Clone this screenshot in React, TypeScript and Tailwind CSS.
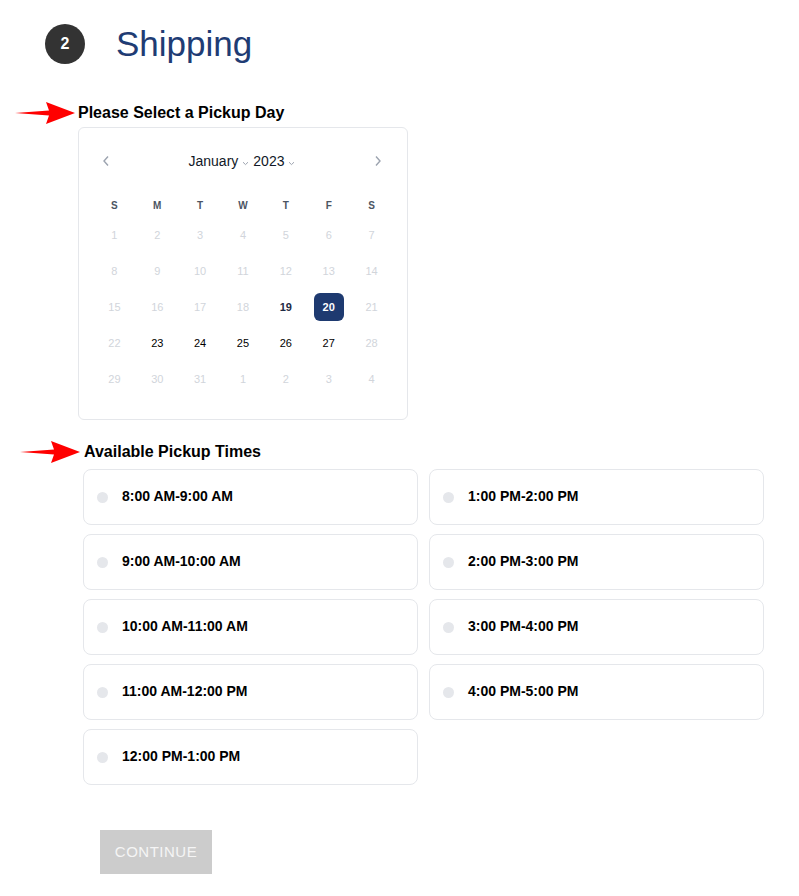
import React, { useState } from 'react';

const FONT = { fontFamily: '"Liberation Sans", Arial, sans-serif' };

const WEEKDAYS = ['S', 'M', 'T', 'W', 'T', 'F', 'S'];

// Jan 2023 grid; enabled days are the pickup window
const ROWS: number[][] = [
  [1, 2, 3, 4, 5, 6, 7],
  [8, 9, 10, 11, 12, 13, 14],
  [15, 16, 17, 18, 19, 20, 21],
  [22, 23, 24, 25, 26, 27, 28],
  [29, 30, 31, 1, 2, 3, 4],
];
const ENABLED = [19, 20, 23, 24, 25, 26, 27];

const SLOTS = [
  ['8:00 AM-9:00 AM', '1:00 PM-2:00 PM'],
  ['9:00 AM-10:00 AM', '2:00 PM-3:00 PM'],
  ['10:00 AM-11:00 AM', '3:00 PM-4:00 PM'],
  ['11:00 AM-12:00 PM', '4:00 PM-5:00 PM'],
  ['12:00 PM-1:00 PM', null],
];

function Arrow() {
  return (
    <svg width="60" height="22" viewBox="0 0 60 22" className="shrink-0">
      <polygon points="0,11 34,8.5 31,0 60,11 31,22 34,13.5" fill="#f00" />
    </svg>
  );
}

function Caret() {
  return (
    <svg width="7" height="5" viewBox="0 0 7 5" className="mt-[4px]">
      <path d="M1 1.2 L3.5 3.6 L6 1.2" stroke="#9ca3af" strokeWidth="1" fill="none" />
    </svg>
  );
}

function Chevron({ dir }: { dir: 'left' | 'right' }) {
  return (
    <svg width="8" height="12" viewBox="0 0 8 12">
      <path
        d={dir === 'left' ? 'M6 1.5 L2 6 L6 10.5' : 'M2 1.5 L6 6 L2 10.5'}
        stroke="#9ca3af"
        strokeWidth="1.4"
        fill="none"
      />
    </svg>
  );
}

export default function App() {
  const [day, setDay] = useState(20);
  const [slot, setSlot] = useState<string | null>(null);

  return (
    <div className="min-h-screen bg-white pb-[23px]" style={FONT}>
      {/* Step header */}
      <div className="flex items-center pt-[24px] pl-[45px]">
        <div className="flex h-[40px] w-[40px] items-center justify-center rounded-full bg-[#333333] text-base font-semibold text-white">
          2
        </div>
        <h2 className="ml-[31px] text-[35px] leading-[40px] text-[#1f3c74]">Shipping</h2>
      </div>

      {/* Pickup day */}
      <div className="mt-[38px] flex items-center pl-[15px]">
        <Arrow />
        <p className="ml-[3px] text-base font-bold leading-[22px] text-black">Please Select a Pickup Day</p>
      </div>

      <div className="ml-[78px] mt-[3px] w-[330px] rounded-md border border-[#e5e7eb] px-[14px] pt-[17px] pb-[22px]">
        <div className="flex h-[32px] items-center justify-between pl-[3px] pr-[5px]">
          <button className="flex h-[20px] w-[20px] items-center justify-center">
            <Chevron dir="left" />
          </button>
          <div className="flex items-center gap-[4px] text-[14px] text-[#111827]">
            <span>January</span>
            <Caret />
            <span>2023</span>
            <Caret />
          </div>
          <button className="flex h-[20px] w-[20px] items-center justify-center">
            <Chevron dir="right" />
          </button>
        </div>

        <div className="mt-[16px] grid h-[24px] grid-cols-7 items-center text-center text-[10px] font-bold text-[#4b5563]">
          {WEEKDAYS.map((d, i) => (
            <span key={i}>{d}</span>
          ))}
        </div>

        {ROWS.map((row, r) => (
          <div key={r} className="grid h-[36px] grid-cols-7 items-center text-center text-[11px]">
            {row.map((d, c) => {
              const inMonth = !(r === 4 && c > 2);
              const enabled = inMonth && ENABLED.includes(d);
              const selected = enabled && d === day;
              return (
                <div key={c} className="flex justify-center">
                  <button
                    disabled={!enabled}
                    onClick={() => setDay(d)}
                    className={
                      selected
                        ? 'flex h-[28px] w-[30px] items-center justify-center rounded-md bg-[#1e3a70] font-bold text-white'
                        : enabled
                          ? d === 19
                            ? 'flex h-[28px] w-[30px] items-center justify-center font-semibold text-[#1f2a44]'
                            : 'flex h-[28px] w-[30px] items-center justify-center text-black'
                          : 'flex h-[28px] w-[30px] items-center justify-center text-[#d1d5db]'
                    }
                  >
                    {d}
                  </button>
                </div>
              );
            })}
          </div>
        ))}
      </div>

      {/* Pickup times */}
      <div className="mt-[21px] flex items-center pl-[20px]">
        <Arrow />
        <p className="ml-[4px] text-base font-bold leading-[22px] text-black">Available Pickup Times</p>
      </div>

      <div className="ml-[83px] mt-[6px] grid w-[681px] grid-cols-2 gap-x-[11px] gap-y-[9px]">
        {SLOTS.flat().map((s, i) =>
          s ? (
            <button
              key={i}
              onClick={() => setSlot(s)}
              className="flex h-[56px] items-center rounded-lg border border-[#e5e7eb] bg-white pl-[13px] pb-[2px] text-left"
            >
              <span
                className={
                  slot === s
                    ? 'mt-[2px] h-[11px] w-[11px] rounded-full border-[3px] border-[#1e3a70] bg-white'
                    : 'mt-[2px] h-[11px] w-[11px] rounded-full bg-[#e5e7eb]'
                }
              />
              <span className="ml-[14px] text-[14px] font-bold text-black">{s}</span>
            </button>
          ) : (
            <div key={i} />
          ),
        )}
      </div>

      <button
        disabled={!slot}
        className="ml-[100px] mt-[45px] h-[44px] w-[112px] bg-[#cccccc] text-[15px] tracking-[0.5px] text-[#f5f5f5]"
      >
        CONTINUE
      </button>
    </div>
  );
}
